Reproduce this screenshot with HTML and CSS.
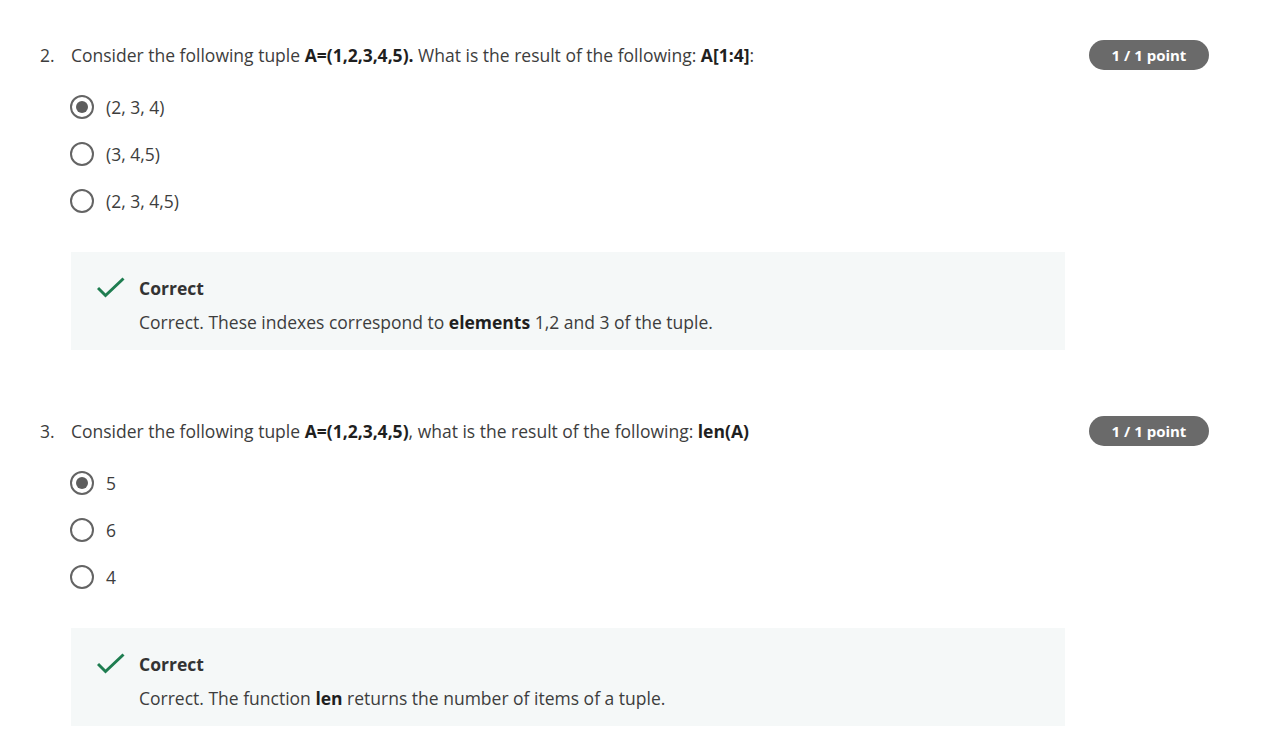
FILE: index.html
```html
<!DOCTYPE html>
<html lang="en">
<head>
<meta charset="utf-8">
<title>Quiz</title>
<link rel="stylesheet" href="styles.css">
</head>
<body>
<main class="page">
  <section class="question">
    <div class="q-head">
      <span class="q-num">2.</span>
      <p class="q-text">Consider the following tuple <b>A=(1,2,3,4,5).</b> What is the result of the following: <b>A[1:4]</b>:</p>
      <span class="badge">1 / 1 point</span>
    </div>
    <ul class="options">
      <li class="option"><span class="radio checked"></span><span>(2, 3, 4)</span></li>
      <li class="option"><span class="radio"></span><span>(3, 4,5)</span></li>
      <li class="option"><span class="radio"></span><span>(2, 3, 4,5)</span></li>
    </ul>
    <div class="feedback">
      <svg class="check" viewBox="0 0 28 22" width="28" height="22" aria-hidden="true"><path d="M1 11 L8.5 18.5 L26.5 1.5" fill="none" stroke="#1e7d50" stroke-width="3"/></svg>
      <div class="fb-body">
        <div class="fb-title">Correct</div>
        <div class="fb-text">Correct. These indexes correspond to <b>elements</b> 1,2 and 3 of the tuple.</div>
      </div>
    </div>
  </section>

  <section class="question">
    <div class="q-head">
      <span class="q-num">3.</span>
      <p class="q-text">Consider the following tuple <b>A=(1,2,3,4,5)</b>, what is the result of the following: <b>len(A)</b></p>
      <span class="badge">1 / 1 point</span>
    </div>
    <ul class="options">
      <li class="option"><span class="radio checked"></span><span>5</span></li>
      <li class="option"><span class="radio"></span><span>6</span></li>
      <li class="option"><span class="radio"></span><span>4</span></li>
    </ul>
    <div class="feedback">
      <svg class="check" viewBox="0 0 28 22" width="28" height="22" aria-hidden="true"><path d="M1 11 L8.5 18.5 L26.5 1.5" fill="none" stroke="#1e7d50" stroke-width="3"/></svg>
      <div class="fb-body">
        <div class="fb-title">Correct</div>
        <div class="fb-text">Correct. The function <b>len</b> returns the number of items of a tuple.</div>
      </div>
    </div>
  </section>
</main>
</body>
</html>
```
FILE: styles.css
```css
* { box-sizing: border-box; }
html, body { margin: 0; padding: 0; background: #fff; }
body {
  font-family: "Open Sans", "Noto Sans", sans-serif;
  font-size: 17.5px;
  color: #3d3d3d;
}
.page {
  padding: 40px 0 0 40px;
  width: 1209px;
}
.question { margin-bottom: 66px; }
.question:last-child { margin-bottom: 0; }
.q-head {
  display: flex;
  align-items: center;
  height: 30px;
}
.q-num { width: 31px; flex: none; }
.q-text { margin: 0; flex: 1; line-height: 24px; }
.q-text b { font-weight: 700; color: #1f1f1f; }
.badge {
  flex: none;
  width: 120px;
  height: 30px;
  border-radius: 15px;
  background: #6a6a6a;
  color: #fff;
  font-size: 15px;
  font-weight: 700;
  display: flex;
  align-items: center;
  justify-content: center;
}
.options {
  list-style: none;
  margin: 25px 0 0 30px;
  padding: 0;
  display: flex;
  flex-direction: column;
  gap: 23px;
}
.option {
  display: flex;
  align-items: center;
  gap: 12px;
  height: 24px;
  line-height: 24px;
  font-size: 17.5px;
}
.radio {
  width: 24px;
  height: 24px;
  border: 2.5px solid #646464;
  border-radius: 50%;
  flex: none;
  display: flex;
  align-items: center;
  justify-content: center;
}
.radio.checked::after {
  content: "";
  width: 12px;
  height: 12px;
  border-radius: 50%;
  background: #5d5d5d;
}
.feedback {
  margin: 39px 0 0 31px;
  width: 994px;
  background: #f5f8f8;
  padding: 24px 0 16px 26px;
  display: flex;
  gap: 14px;
}
.check { flex: none; margin-top: 1px; }
.fb-body { line-height: 24px; }
.fb-title { font-weight: 700; color: #333; }
.fb-text { margin-top: 10px; }
.fb-text b { color: #1f1f1f; }
```
